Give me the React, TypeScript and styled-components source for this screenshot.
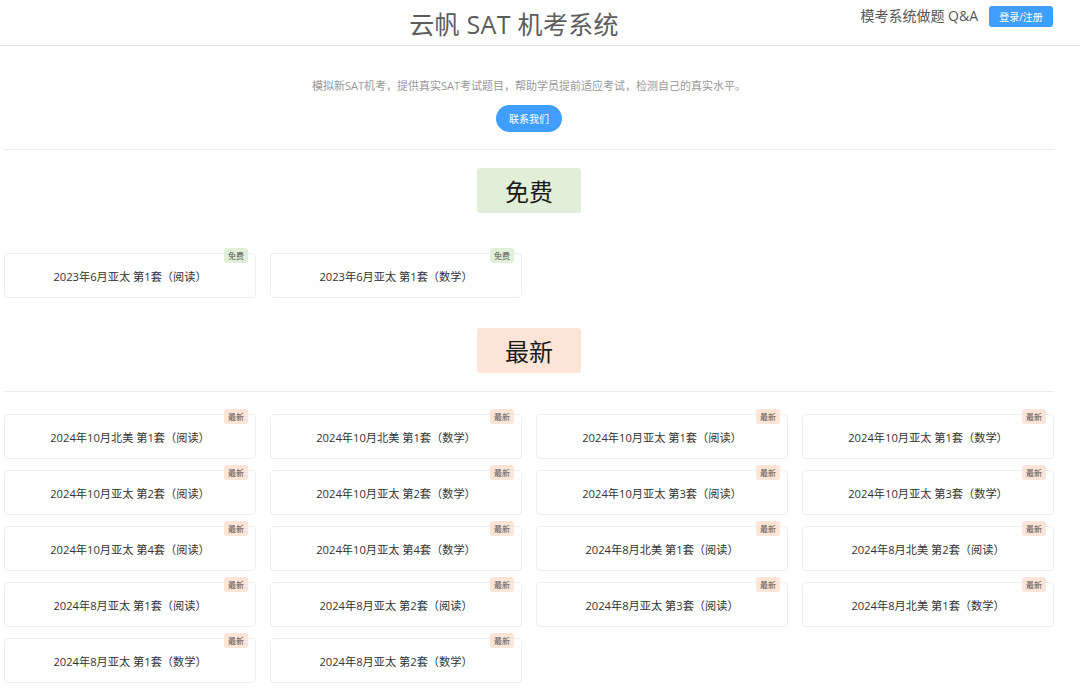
import React from "react";
import styled, { createGlobalStyle } from "styled-components";

type Tone = "free" | "new";

const toneColors: Record<Tone, string> = {
  free: "#e1efd8",
  new: "#fce4d6",
};

const freeItems = ["2023年6月亚太 第1套（阅读）", "2023年6月亚太 第1套（数学）"];

const newItems = [
  "2024年10月北美 第1套（阅读）",
  "2024年10月北美 第1套（数学）",
  "2024年10月亚太 第1套（阅读）",
  "2024年10月亚太 第1套（数学）",
  "2024年10月亚太 第2套（阅读）",
  "2024年10月亚太 第2套（数学）",
  "2024年10月亚太 第3套（阅读）",
  "2024年10月亚太 第3套（数学）",
  "2024年10月亚太 第4套（阅读）",
  "2024年10月亚太 第4套（数学）",
  "2024年8月北美 第1套（阅读）",
  "2024年8月北美 第2套（阅读）",
  "2024年8月亚太 第1套（阅读）",
  "2024年8月亚太 第2套（阅读）",
  "2024年8月亚太 第3套（阅读）",
  "2024年8月北美 第1套（数学）",
  "2024年8月亚太 第1套（数学）",
  "2024年8月亚太 第2套（数学）",
];

const GlobalStyle = createGlobalStyle`
  body {
    margin: 0;
    background: #fff;
    font-family: "Open Sans", "Noto Sans CJK SC", sans-serif;
    color: #333;
  }
`;

export default function App() {
  return (
    <>
      <GlobalStyle />
      <Header>
        <Title>云帆 SAT 机考系统</Title>
        <HeaderRight>
          <NavLink>模考系统做题 Q&amp;A</NavLink>
          <LoginButton>登录/注册</LoginButton>
        </HeaderRight>
      </Header>

      <Main>
        <Intro>
          <IntroText>模拟新SAT机考，提供真实SAT考试题目，帮助学员提前适应考试，检测自己的真实水平。</IntroText>
          <ContactButton>联系我们</ContactButton>
        </Intro>

        <Divider />

        <SectionHead>
          <SectionBadge tone="free">免费</SectionBadge>
        </SectionHead>
        <CardGrid $top={40}>
          {freeItems.map((t) => (
            <Card key={t}>
              <Tag tone="free">免费</Tag>
              {t}
            </Card>
          ))}
        </CardGrid>

        <SectionHead $top={30}>
          <SectionBadge tone="new">最新</SectionBadge>
        </SectionHead>
        <Divider $top={18} />
        <CardGrid $top={22}>
          {newItems.map((t) => (
            <Card key={t}>
              <Tag tone="new">最新</Tag>
              {t}
            </Card>
          ))}
        </CardGrid>
      </Main>
    </>
  );
}

const Header = styled.header`
  position: relative;
  height: 45px;
  border-bottom: 1px solid #e8e8e8;
  display: flex;
  align-items: center;
  justify-content: center;
`;

const Title = styled.h1`
  margin: 0 0 0 -52px;
  font-family: "Open Sans", "Noto Sans CJK SC", sans-serif;
  font-size: 25px;
  font-weight: 400;
  color: #5c5c5c;
  letter-spacing: 0.3px;
`;

const HeaderRight = styled.div`
  position: absolute;
  right: 27px;
  top: 5px;
  display: flex;
  align-items: center;
  gap: 11px;
`;

const NavLink = styled.span`
  font-size: 14px;
  color: #555;
  line-height: 22px;
`;

const LoginButton = styled.button`
  width: 64px;
  height: 21px;
  border: none;
  border-radius: 3px;
  background: #409eff;
  color: #fff;
  font-family: "Open Sans", "Noto Sans CJK SC", sans-serif;
  font-size: 10px;
  padding: 0;
`;

const Main = styled.main`
  width: 1050px;
  margin-left: 4px;
  padding-bottom: 10px;
`;

const Intro = styled.section`
  display: flex;
  flex-direction: column;
  align-items: center;
  padding-top: 32px;
`;

const IntroText = styled.p`
  margin: 0;
  font-size: 11px;
  line-height: 16px;
  color: #999;
`;

const ContactButton = styled.button`
  margin-top: 11px;
  width: 66px;
  height: 27px;
  border: none;
  border-radius: 14px;
  background: #409eff;
  color: #fff;
  font-family: "Open Sans", "Noto Sans CJK SC", sans-serif;
  font-size: 10px;
  padding: 0;
`;

const Divider = styled.hr<{ $top?: number }>`
  margin: ${(p) => p.$top ?? 17}px 0 0;
  border: none;
  border-top: 1px solid #ececec;
`;

const SectionHead = styled.div<{ $top?: number }>`
  display: flex;
  justify-content: center;
  margin-top: ${(p) => p.$top ?? 18}px;
`;

const SectionBadge = styled.div<{ tone: Tone }>`
  width: 104px;
  height: 45px;
  border-radius: 3px;
  background: ${(p) => toneColors[p.tone]};
  display: flex;
  align-items: center;
  justify-content: center;
  font-family: "Noto Sans CJK SC", sans-serif;
  font-size: 24px;
  color: #1a1a1a;
`;

const CardGrid = styled.div<{ $top: number }>`
  display: grid;
  grid-template-columns: repeat(4, 252px);
  column-gap: 14px;
  row-gap: 11px;
  margin-top: ${(p) => p.$top}px;
`;

const Card = styled.div`
  position: relative;
  height: 45px;
  box-sizing: border-box;
  border: 1px solid #ebeef5;
  border-radius: 4px;
  background: #fff;
  display: flex;
  align-items: center;
  justify-content: center;
  font-size: 11.2px;
  color: #333;
`;

const Tag = styled.span<{ tone: Tone }>`
  position: absolute;
  top: -6px;
  right: 7px;
  height: 15px;
  padding: 0 4px;
  border-radius: 3px;
  background: ${(p) => toneColors[p.tone]};
  font-size: 8px;
  line-height: 15px;
  color: #555;
`;
